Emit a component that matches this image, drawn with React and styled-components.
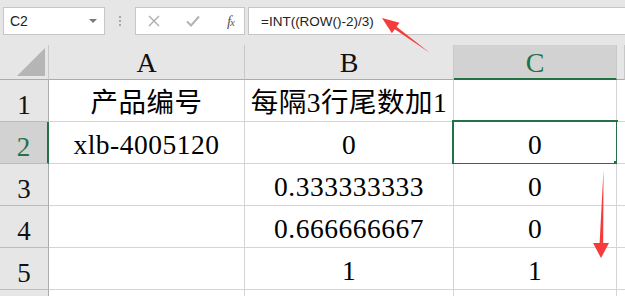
import React from "react";
import styled, { createGlobalStyle } from "styled-components";

const GlobalStyle = createGlobalStyle`
  html, body { margin: 0; padding: 0; background: #e6e6e6; }
  * { box-sizing: border-box; }
`;

const GREEN = "#217346";

const Page = styled.div`
  position: relative;
  width: 625px;
  height: 296px;
  overflow: hidden;
  background: #e6e6e6;
`;

const Toolbar = styled.div`
  display: flex;
  align-items: flex-start;
  height: 45px;
  padding: 7px 0 0 3px;
  font-family: "Liberation Sans", "Noto Sans", sans-serif;
`;

const NameBox = styled.div`
  display: flex;
  align-items: center;
  justify-content: space-between;
  width: 102px;
  height: 28px;
  padding: 0 7px 0 6px;
  background: #fff;
  border: 1px solid #c6c6c6;
  font-size: 14px;
  color: #222;
`;

const Caret = styled.span`
  width: 0;
  height: 0;
  border-left: 4px solid transparent;
  border-right: 4px solid transparent;
  border-top: 4px solid #7a7a7a;
`;

const Grip = styled.div`
  display: flex;
  flex-direction: column;
  gap: 2px;
  width: 30px;
  height: 28px;
  align-items: center;
  justify-content: center;
  span {
    width: 2px;
    height: 2px;
    background: #a8a8a8;
  }
`;

const FxBox = styled.div`
  display: flex;
  align-items: center;
  justify-content: space-between;
  width: 110px;
  height: 28px;
  padding: 0 10px 0 12px;
  background: #fff;
  border: 1px solid #c6c6c6;
`;

const FxLabel = styled.span`
  font-family: "Liberation Serif", serif;
  font-style: italic;
  font-size: 15px;
  color: #5a5a5a;
  letter-spacing: -1px;
  small {
    font-size: 11px;
  }
`;

const FormulaBox = styled.div`
  flex: 1;
  display: flex;
  align-items: center;
  height: 28px;
  margin-left: 3px;
  padding-left: 12px;
  background: #fff;
  border: 1px solid #c6c6c6;
  border-right: none;
  font-size: 13.5px;
  color: #222;
`;

const Sheet = styled.div`
  display: grid;
  grid-template-columns: 49px 196px 209px 163px 1fr;
  grid-template-rows: 35px repeat(6, 42px);
  font-family: "Liberation Serif", "Noto Sans CJK SC", serif;
`;

const Corner = styled.div`
  display: flex;
  align-items: flex-end;
  justify-content: flex-end;
  padding: 0 3px 3px 0;
  background: #e6e6e6;
  border-right: 1px solid #c8c8c8;
  border-bottom: 1px solid #ababab;
`;

const ColHeader = styled.div`
  display: flex;
  align-items: flex-end;
  justify-content: center;
  padding-bottom: ${(p) => (p.$active ? "1px" : "2px")};
  background: ${(p) => (p.$active ? "#d2d2d2" : "#e6e6e6")};
  border-right: 1px solid #c8c8c8;
  border-bottom: ${(p) => (p.$active ? `2px solid ${GREEN}` : "1px solid #ababab")};
  color: ${(p) => (p.$active ? GREEN : "#111")};
  font-size: 28px;
  line-height: 28px;
`;

const RowHeader = styled.div`
  display: flex;
  align-items: flex-end;
  justify-content: center;
  padding-bottom: 2px;
  background: ${(p) => (p.$active ? "#d2d2d2" : "#e6e6e6")};
  border-right: ${(p) => (p.$active ? `2px solid ${GREEN}` : "1px solid #ababab")};
  border-bottom: 1px solid #bcbcbc;
  color: ${(p) => (p.$active ? GREEN : "#111")};
  font-size: 27px;
  line-height: 27px;
`;

const Cell = styled.div`
  position: relative;
  display: flex;
  align-items: flex-end;
  justify-content: center;
  padding-bottom: 5px;
  background: #fff;
  border-right: ${(p) => (p.$last ? "none" : "1px solid #d4d4d4")};
  border-bottom: 1px solid #d4d4d4;
  color: #000;
  font-size: 27.5px;
  line-height: 27px;
  letter-spacing: 0.5px;
  white-space: nowrap;
`;

const Selection = styled.div`
  position: absolute;
  left: -2px;
  top: -2px;
  right: -2px;
  bottom: -2px;
  border: 2px solid ${GREEN};
`;

const FillHandle = styled.div`
  position: absolute;
  right: -4px;
  bottom: -4px;
  width: 6px;
  height: 6px;
  background: ${GREEN};
`;

const Overlay = styled.svg`
  position: absolute;
  left: 0;
  top: 0;
  pointer-events: none;
`;

const rows = [
  ["产品编号", "每隔3行尾数加1", ""],
  ["xlb-4005120", "0", "0"],
  ["", "0.333333333", "0"],
  ["", "0.666666667", "0"],
  ["", "1", "1"],
];

export default function App() {
  return (
    <Page>
      <GlobalStyle />
      <Toolbar>
        <NameBox>
          C2
          <Caret />
        </NameBox>
        <Grip>
          <span />
          <span />
          <span />
        </Grip>
        <FxBox>
          <svg width="12" height="12" viewBox="0 0 12 12">
            <path d="M1 1 L11 11 M11 1 L1 11" stroke="#ababab" strokeWidth="1.3" fill="none" />
          </svg>
          <svg width="14" height="12" viewBox="0 0 14 12">
            <path d="M1 6.5 L5 10.5 L13 1.5" stroke="#b3b3b3" strokeWidth="2" fill="none" />
          </svg>
          <FxLabel>
            f<small>x</small>
          </FxLabel>
        </FxBox>
        <FormulaBox>=INT((ROW()-2)/3)</FormulaBox>
      </Toolbar>

      <Sheet>
        <Corner>
          <svg width="28" height="28" viewBox="0 0 28 28">
            <polygon points="28,0 28,28 0,28" fill="#b5b5b5" />
          </svg>
        </Corner>
        <ColHeader>A</ColHeader>
        <ColHeader>B</ColHeader>
        <ColHeader $active>C</ColHeader>
        <ColHeader />

        {rows.map((r, i) => (
          <React.Fragment key={i}>
            <RowHeader $active={i === 1}>{i + 1}</RowHeader>
            <Cell>{r[0]}</Cell>
            <Cell>{r[1]}</Cell>
            <Cell>
              {r[2]}
              {i === 1 && (
                <>
                  <Selection />
                  <FillHandle />
                </>
              )}
            </Cell>
            <Cell $last />
          </React.Fragment>
        ))}

        {/* row 6 runs off the bottom edge */}
        <RowHeader />
        <Cell />
        <Cell />
        <Cell />
        <Cell $last />
      </Sheet>

      <Overlay width="625" height="296" viewBox="0 0 625 296">
        <polygon
          points="430,53 396.6,26.8 399.5,22.7 382,18 391.9,33.3 394.8,29.2"
          fill="#f53c3c"
        />
        <polygon
          points="603.5,170 603.2,243 609,243 601,258 593,243 599.6,243"
          fill="#f53c3c"
        />
      </Overlay>
    </Page>
  );
}
